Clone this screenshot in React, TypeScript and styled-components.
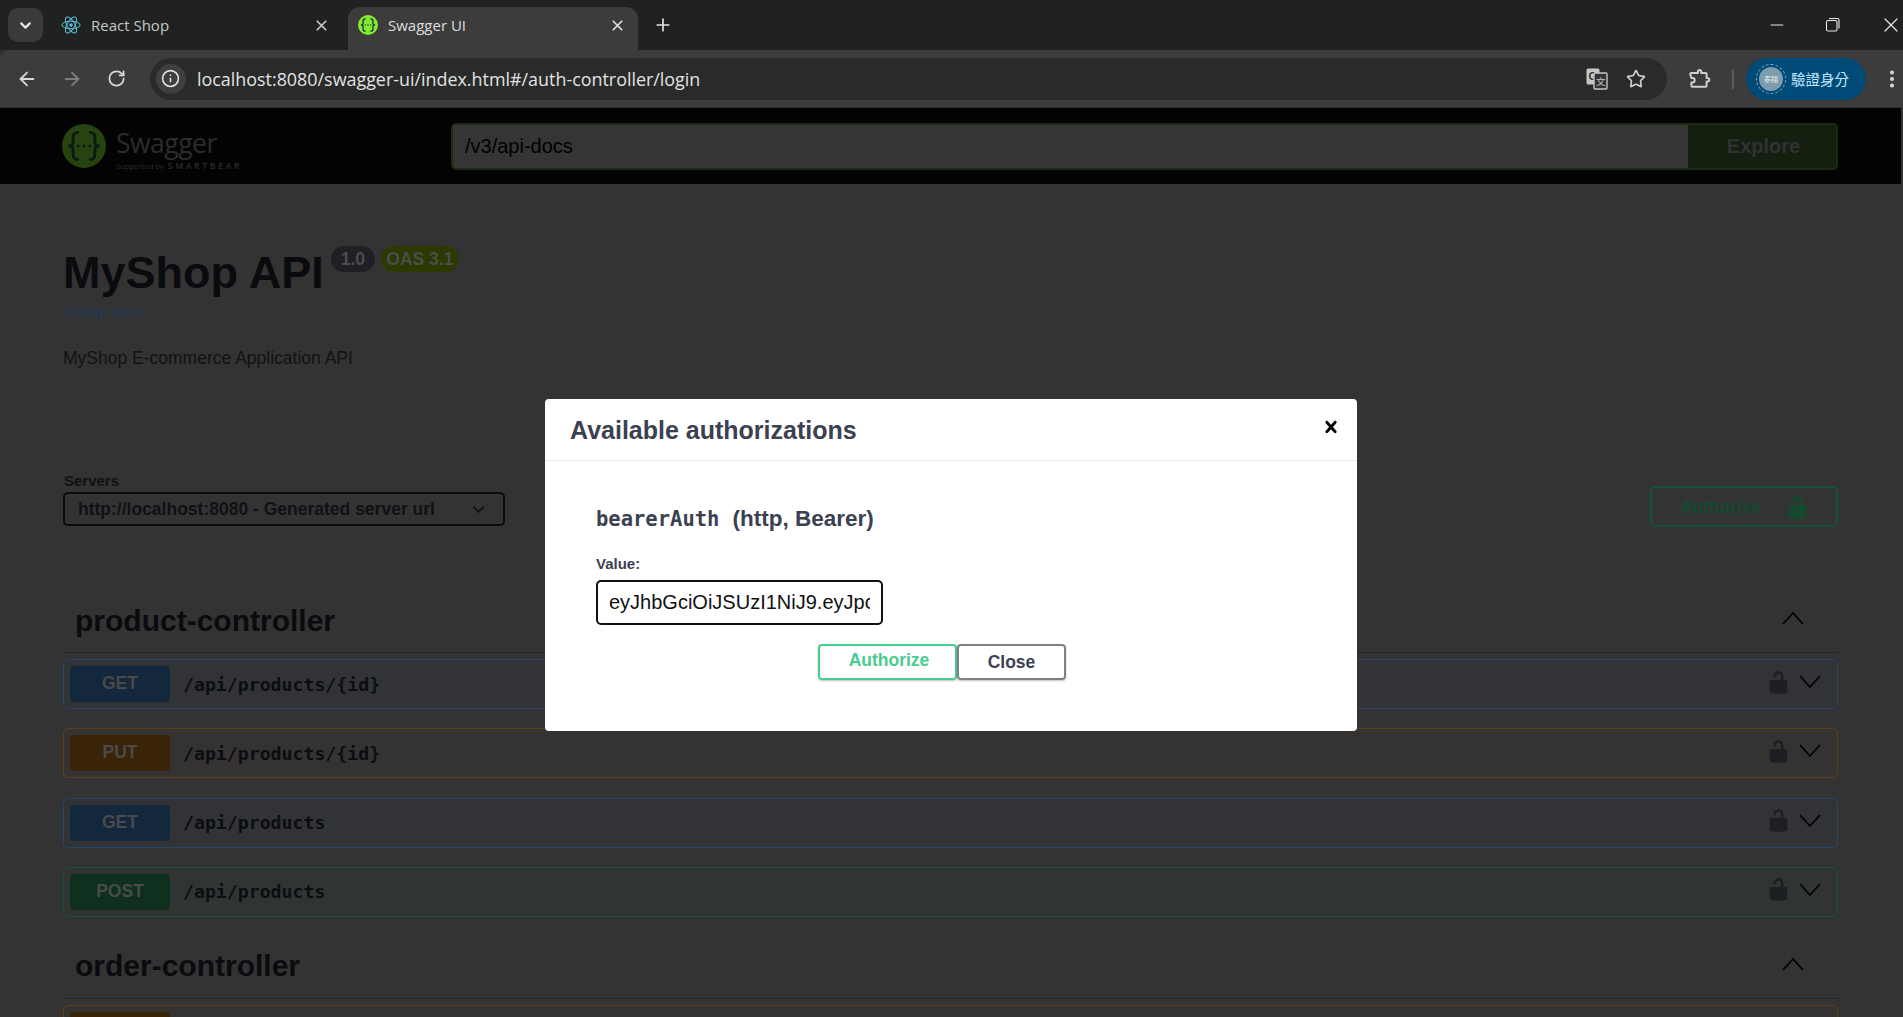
import React from "react";
import styled, { createGlobalStyle } from "styled-components";
import { ArrowLeft, ArrowRight, RotateCw, Info, Star, X, Plus, ChevronDown, Minus, EllipsisVertical } from "lucide-react";

const Global = createGlobalStyle`
  html, body { margin: 0; padding: 0; background: #333; }
  * { box-sizing: border-box; }
`;

const CHROME_FONT = `"Open Sans", "Noto Sans", sans-serif`;
const SANS = `"Liberation Sans", Arial, sans-serif`;
const MONO = `"DejaVu Sans Mono", "Liberation Mono", monospace`;

const Page = styled.div`
  position: relative;
  width: 1903px;
  height: 1017px;
  overflow: hidden;
  background: #333;
  font-family: ${SANS};
  display: flex;
  flex-direction: column;
`;

/* ---------- browser chrome ---------- */
const TabStrip = styled.div`
  height: 50px;
  flex: none;
  background: #202222;
  display: flex;
  align-items: flex-end;
  padding-left: 8px;
`;
const TabSearch = styled.div`
  width: 35px;
  height: 34px;
  margin-bottom: 8px;
  margin-right: 8px;
  border-radius: 10px;
  background: #3a3a3a;
  color: #e6e6e6;
  display: flex;
  align-items: center;
  justify-content: center;
`;
const Tab = styled.div<{ $active?: boolean; $width: number }>`
  width: ${(p) => p.$width}px;
  height: 43px;
  padding: 0 ${(p) => (p.$active ? 12 : 18)}px 7px 10px;
  border-radius: 12px 12px 0 0;
  background: ${(p) => (p.$active ? "#3c3c3c" : "transparent")};
  color: ${(p) => (p.$active ? "#dedede" : "#c4c7c5")};
  font-family: ${CHROME_FONT};
  font-size: 15px;
  display: flex;
  align-items: center;
  gap: 10px;
`;
const TabTitle = styled.span`
  flex: 1;
  white-space: nowrap;
`;
const NewTab = styled.div`
  margin: 0 0 7px 15px;
  height: 36px;
  color: #e3e3e3;
  display: flex;
  align-items: center;
`;
const WindowControls = styled.div`
  margin-left: auto;
  height: 50px;
  display: flex;
  align-items: center;
  gap: 38px;
  color: #e8e8e8;
`;
const Toolbar = styled.div`
  height: 58px;
  flex: none;
  background: #3c3c3c;
  border-radius: 10px 0 0 0;
  border-bottom: 1px solid #2e2e2e;
  display: flex;
  align-items: center;
  padding-left: 16px;
`;
const NavIcon = styled.div<{ $dim?: boolean }>`
  width: 22px;
  height: 22px;
  margin-right: 23px;
  color: ${(p) => (p.$dim ? "#7d7d7d" : "#d8d8d8")};
  display: flex;
  align-items: center;
  justify-content: center;
`;
const Omnibox = styled.div`
  width: 1518px;
  height: 42px;
  margin-left: -1px;
  border-radius: 21px;
  background: #292a2a;
  display: flex;
  align-items: center;
  padding: 0 21px 0 6px;
`;
const SiteInfo = styled.div`
  width: 30px;
  height: 30px;
  border-radius: 50%;
  background: #3f3f3f;
  color: #e3e3e3;
  display: flex;
  align-items: center;
  justify-content: center;
  margin-right: 11px;
`;
const Url = styled.span`
  flex: 1;
  color: #e3e3e3;
  font-family: ${CHROME_FONT};
  font-size: 17.9px;
  white-space: nowrap;
`;
const OmniIcons = styled.div`
  display: flex;
  align-items: center;
  gap: 18px;
  color: #cfcfcf;
`;
const ExtensionIcon = styled.div`
  margin-left: 20px;
  width: 24px;
  height: 24px;
  color: #cfcfcf;
`;
const Separator = styled.div`
  width: 2px;
  height: 20px;
  margin: 0 12px 0 21px;
  background: #5b5b5b;
`;
const ProfilePill = styled.div`
  width: 120px;
  height: 42px;
  border-radius: 21px;
  background: #004a77;
  color: #c2e7ff;
  font-family: "Noto Sans CJK TC", sans-serif;
  font-size: 14.5px;
  display: flex;
  align-items: center;
  padding-left: 13px;
  gap: 8px;
  white-space: nowrap;
`;
const Avatar = styled.div`
  position: relative;
  width: 24px;
  height: 24px;
  flex: none;
  border-radius: 50%;
  background: #7d9cad;
  color: #e9eef1;
  font-size: 7px;
  display: flex;
  align-items: center;
  justify-content: center;
  &::after {
    content: "";
    position: absolute;
    inset: -3px;
    border-radius: 50%;
    border: 1.5px dashed #86a9bf;
  }
`;
const MenuDots = styled.div`
  margin-left: 15px;
  color: #d8d8d8;
  display: flex;
`;

/* ---------- swagger top bar ---------- */
const TopBar = styled.div`
  height: 76px;
  flex: none;
  margin-right: 2px;
  background: #030303;
  display: flex;
  align-items: center;
  padding: 0 63px 0 62px;
`;
const Logo = styled.div`
  width: 389px;
  display: flex;
  align-items: center;
  gap: 10px;
`;
const LogoWords = styled.div`
  display: flex;
  flex-direction: column;
  color: #2c2c2c;
  margin-top: 4px;
`;
const LogoName = styled.span`
  font-family: "Open Sans", sans-serif;
  font-size: 26.5px;
  line-height: 36px;
  letter-spacing: -0.5px;
`;
const LogoSupport = styled.span`
  font-family: "Open Sans", sans-serif;
  font-size: 7.6px;
  line-height: 10px;
  white-space: nowrap;
`;
const Bear = styled.span`
  margin-left: 4px;
  font-size: 8.8px;
  font-weight: 600;
  letter-spacing: 2.5px;
`;
const SpecForm = styled.div`
  flex: 1;
  height: 47px;
  display: flex;
  border-radius: 5px;
  overflow: hidden;
  border: 2px solid #1c2a0f;
  background: #1c2a0f;
`;
const SpecInput = styled.input`
  flex: 1;
  min-width: 0;
  border: 0;
  outline: 0;
  padding: 0 12px;
  background: #353535;
  color: #000;
  font-family: ${SANS};
  font-size: 20px;
`;
const Explore = styled.div`
  width: 148px;
  padding-left: 3px;
  background: #151f10;
  color: #2f3334;
  font-size: 20px;
  font-weight: 700;
  display: flex;
  align-items: center;
  justify-content: center;
`;

/* ---------- swagger info ---------- */
const InfoBlock = styled.div`
  padding: 63px 65px 0 63px;
  height: 281px;
  flex: none;
`;
const TitleRow = styled.div`
  display: flex;
  align-items: flex-start;
  gap: 6px;
`;
const Title = styled.h2`
  margin: 0 1px 0 0;
  color: #0a0b0f;
  font-size: 45px;
  line-height: 52px;
  font-weight: 700;
`;
const Badge = styled.span<{ $bg: string; $width: number }>`
  width: ${(p) => p.$width}px;
  height: 26px;
  margin-top: -1px;
  border-radius: 13px;
  background: ${(p) => p.$bg};
  color: #4c4c4c;
  font-size: 17.5px;
  font-weight: 700;
  line-height: 26px;
  text-align: center;
`;
const SpecLink = styled.div`
  margin-top: 4px;
  color: #24395a;
  font-size: 15px;
  line-height: 18px;
`;
const Description = styled.p`
  margin: 25px 0 0;
  color: #121212;
  font-size: 17.5px;
  line-height: 25px;
`;
const ServersBar = styled.div`
  height: 101px;
  flex: none;
  padding: 7px 65px 0 64px;
  display: flex;
  align-items: flex-start;
  justify-content: space-between;
  border-bottom: 1px solid #303030;
`;
const ServersLabel = styled.div`
  color: #101116;
  font-size: 15px;
  font-weight: 700;
  line-height: 18px;
  margin-bottom: 2px;
`;
const ServerSelect = styled.div`
  width: 442px;
  height: 34px;
  margin-left: -1px;
  padding: 0 15px 0 13px;
  border: 2px solid #0b0c0f;
  border-radius: 5px;
  color: #101116;
  font-size: 17.5px;
  font-weight: 700;
  display: flex;
  align-items: center;
  justify-content: space-between;
  white-space: nowrap;
`;
const AuthorizeBtn = styled.div`
  width: 188px;
  height: 41px;
  margin-top: 14px;
  border: 2px solid #175038;
  border-radius: 5px;
  color: #134a2e;
  font-size: 17.5px;
  font-weight: 700;
  display: flex;
  align-items: center;
  justify-content: center;
  gap: 24px;
  padding: 1px 0 0 2px;
`;

/* ---------- operations ---------- */
const Section = styled.section<{ $top: number }>`
  padding: 0 65px 0 63px;
  margin-top: ${(p) => p.$top}px;
`;
const SectionHead = styled.div`
  height: 50px;
  padding: 0 33px 14px 12px;
  border-bottom: 1px solid #262626;
  display: flex;
  align-items: center;
  justify-content: space-between;
`;
const SectionTitle = styled.h3`
  margin: 0;
  color: #0a0b0f;
  font-size: 30px;
  line-height: 34px;
  font-weight: 700;
`;
const SectionToggle = styled.div`
  display: flex;
  margin-bottom: 5px;
`;
const OpList = styled.div`
  padding-top: 6px;
  display: flex;
  flex-direction: column;
  gap: 19.3px;
`;
const palette = {
  GET: { row: "#313337", border: "#254668", badge: "#14283d" },
  PUT: { row: "#353331", border: "#5e3e18", badge: "#3a2408" },
  POST: { row: "#303533", border: "#1d5039", badge: "#0f2f1f" },
};
type Method = keyof typeof palette;
const Row = styled.div<{ $m: Method }>`
  height: 50px;
  flex: none;
  padding: 0 15px 0 6px;
  border: 1px solid ${(p) => palette[p.$m].border};
  border-radius: 5px;
  background: ${(p) => palette[p.$m].row};
  display: flex;
  align-items: center;
`;
const MethodTag = styled.div<{ $m: Method }>`
  width: 100px;
  height: 36px;
  border-radius: 4px;
  background: ${(p) => palette[p.$m].badge};
  color: #4a4a4a;
  font-size: 17.5px;
  font-weight: 700;
  line-height: 35px;
  text-align: center;
`;
const RowPath = styled.span`
  flex: 1;
  margin-left: 13px;
  color: #0c0d12;
  font-family: ${MONO};
  font-size: 18.2px;
  font-weight: 700;
`;
const RowControls = styled.div`
  margin-bottom: 4px;
  display: flex;
  align-items: center;
  gap: 7px;
  color: #1e1f22;
`;

/* ---------- modal ---------- */
const Backdrop = styled.div`
  position: absolute;
  inset: 108px 0 0 0;
  display: flex;
  justify-content: center;
  padding-top: 291px;
`;
const Modal = styled.div`
  width: 812px;
  height: 332px;
  margin-right: 1px;
  background: #fff;
  border-radius: 4px;
  color: #3b4151;
`;
const ModalHead = styled.div`
  height: 62px;
  padding: 2px 14px 0 25px;
  border-bottom: 1px solid #ebebeb;
  display: flex;
  align-items: center;
  justify-content: space-between;
`;
const ModalTitle = styled.h3`
  margin: 0;
  font-size: 25px;
  font-weight: 700;
`;
const CloseIcon = styled.div`
  color: #000;
  display: flex;
  margin-top: -7px;
`;
const ModalBody = styled.div`
  padding: 45px 51px 0;
`;
const Scheme = styled.h4`
  margin: 0;
  font-size: 22.5px;
  line-height: 26px;
  font-weight: 700;
  display: flex;
  align-items: baseline;
  gap: 13px;
`;
const SchemeCode = styled.code`
  font-family: ${MONO};
  font-size: 20.5px;
`;
const ValueLabel = styled.label`
  display: block;
  margin-top: 23px;
  font-size: 15px;
  line-height: 18px;
  font-weight: 700;
`;
const TokenInput = styled.input`
  display: block;
  width: 287px;
  height: 45px;
  margin-top: 7px;
  padding: 0 11px;
  border: 2px solid #101010;
  border-radius: 5px;
  outline: 0;
  background: #fff;
  color: #111;
  font-family: ${SANS};
  font-size: 20px;
`;
const Buttons = styled.div`
  display: flex;
  justify-content: center;
  margin-top: 19px;
  padding-right: 18px;
`;
const ModalBtn = styled.div<{ $primary?: boolean }>`
  width: ${(p) => (p.$primary ? 139 : 109)}px;
  height: 36px;
  border: 2px solid ${(p) => (p.$primary ? "#49cc90" : "#808080")};
  border-radius: 4px;
  color: ${(p) => (p.$primary ? "#49cc90" : "#3b4151")};
  font-size: 17.5px;
  font-weight: 700;
  line-height: ${(p) => (p.$primary ? 28 : 33)}px;
  text-align: center;
  padding-left: ${(p) => (p.$primary ? 3 : 0)}px;
  box-shadow: 0 1px 2px rgba(0, 0, 0, 0.25);
`;

/* ---------- drawings ---------- */
const ReactIcon = () => (
  <svg width="20" height="20" viewBox="-11 -11 22 22" fill="none" stroke="#58c4dc" strokeWidth="1.1">
    <circle r="1.9" fill="#58c4dc" stroke="none" />
    <ellipse rx="10" ry="4.2" />
    <ellipse rx="10" ry="4.2" transform="rotate(60)" />
    <ellipse rx="10" ry="4.2" transform="rotate(120)" />
  </svg>
);
const Braces = ({ color, w = 1.6 }: { color: string; w?: number }) => (
  <g fill="none" stroke={color} strokeWidth={w} strokeLinecap="round" strokeLinejoin="round">
    <path d="M8.6 4.6c-2.2 0-2.5 1.2-2.5 3v2c0 1.3-.7 2.4-2 2.4 1.3 0 2 1.1 2 2.4v2c0 1.8.3 3 2.5 3" />
    <path d="M15.4 4.6c2.2 0 2.5 1.2 2.5 3v2c0 1.3.7 2.4 2 2.4-1.3 0-2 1.1-2 2.4v2c0 1.8-.3 3-2.5 3" />
    <path d="M8.8 12h.01M12 12h.01M15.2 12h.01" />
  </g>
);
const SwaggerFavicon = () => (
  <svg width="20" height="20" viewBox="0 0 24 24">
    <circle cx="12" cy="12" r="12" fill="#85ea2d" />
    <Braces color="#173647" />
  </svg>
);
const SwaggerLogo = () => (
  <svg width="44" height="44" viewBox="0 0 24 24">
    <circle cx="12" cy="12" r="12" fill="#27430f" />
    <Braces color="#0a1a14" />
  </svg>
);
const TranslateIcon = () => (
  <svg width="22" height="22" viewBox="0 0 22 22">
    <rect x="0.5" y="0.5" width="13" height="16" rx="1.5" fill="#c6c6c6" />
    <text x="2.5" y="12" fontFamily={SANS} fontSize="11" fontWeight="700" fill="#333">G</text>
    <rect x="8" y="5" width="13" height="16" rx="1" fill="#333" stroke="#c6c6c6" strokeWidth="1.4" />
    <text x="10" y="17" fontFamily="Noto Sans CJK TC" fontSize="9.5" fill="#c6c6c6">文</text>
  </svg>
);
const PuzzleIcon = () => (
  <svg width="24" height="24" viewBox="0 0 24 24" fill="none" stroke="currentColor" strokeWidth="2" strokeLinejoin="round">
    <path d="M8 6h3V4.6a1.6 1.6 0 0 1 3.2 0V6h4.400a1 1 0 0 1 1 1v4h1a1.7 1.7 0 0 1 0 3.4h-1v4.4a1 1 0 0 1-1 1H5.4a1 1 0 0 1-1-1V15.5h1a2.3 2.3 0 0 0 0-4.6h-1L3.2 7a1 1 0 0 1 1-1z" />
  </svg>
);
const Lock = ({ size = 25 }: { size?: number }) => (
  <svg width={size} height={size} viewBox="0 0 20 20" fill="currentColor">
    <path d="M15.8 8H14V5.6C14 2.703 12.665 1 10 1 7.334 1 6 2.703 6 5.6V6h2v-.801C8 3.754 8.797 3 10 3c1.203 0 2 .754 2 2.199V8H4c-.553 0-1 .646-1 1.199V17c0 .549.428 1.139.951 1.307l1.197.387C5.672 18.861 6.55 19 7.1 19h5.8c.549 0 1.428-.139 1.951-.307l1.196-.387c.524-.167.953-.757.953-1.306V9.199C17 8.646 16.352 8 15.8 8z" />
  </svg>
);
const Chevron = ({ up }: { up?: boolean }) => (
  <svg width="24" height="14" viewBox="0 0 24 14" fill="none" stroke="#000" strokeWidth="1.7">
    <path d={up ? "M2 13 12 2l10 11" : "M2 1l10 11L22 1"} />
  </svg>
);
const CloseGlyph = () => (
  <svg width="24" height="24" viewBox="0 0 20 20" fill="currentColor">
    <path d="M14.348 14.849c-.469.469-1.229.469-1.697 0L10 11.819l-2.651 3.029c-.469.469-1.229.469-1.697 0-.469-.469-.469-1.229 0-1.697l2.758-3.15-2.759-3.152c-.469-.469-.469-1.228 0-1.697s1.228-.469 1.697 0L10 8.183l2.651-3.031c.469-.469 1.228-.469 1.697 0s.469 1.229 0 1.697l-2.758 3.152 2.758 3.15c.469.469.469 1.229 0 1.698z" />
  </svg>
);
const RestoreGlyph = () => (
  <svg width="16" height="16" viewBox="0 0 16 16" fill="none" stroke="currentColor" strokeWidth="1.1">
    <rect x="1.5" y="3.5" width="10.5" height="10.5" rx="1.5" />
    <path d="M4 1.5h8.5a1.5 1.5 0 0 1 1.5 1.5v8.5" />
  </svg>
);

const OPS: { m: Method; path: string }[] = [
  { m: "GET", path: "/api/products/{id}" },
  { m: "PUT", path: "/api/products/{id}" },
  { m: "GET", path: "/api/products" },
  { m: "POST", path: "/api/products" },
];

const Operation = ({ m, path }: { m: Method; path: string }) => (
  <Row $m={m}>
    <MethodTag $m={m}>{m}</MethodTag>
    <RowPath>{path}</RowPath>
    <RowControls>
      <Lock />
      <Chevron />
    </RowControls>
  </Row>
);

export default function App() {
  return (
    <Page>
      <Global />
      <TabStrip>
        <TabSearch><ChevronDown size={17} strokeWidth={3} /></TabSearch>
        <Tab $width={297}>
          <ReactIcon />
          <TabTitle>React Shop</TabTitle>
          <X size={17} strokeWidth={2.4} />
        </Tab>
        <Tab $active $width={290}>
          <SwaggerFavicon />
          <TabTitle>Swagger UI</TabTitle>
          <X size={17} strokeWidth={2.4} />
        </Tab>
        <NewTab><Plus size={20} strokeWidth={2} /></NewTab>
        <WindowControls>
          <Minus size={20} strokeWidth={1.2} />
          <RestoreGlyph />
          <X size={24} strokeWidth={1.2} />
        </WindowControls>
      </TabStrip>
      <Toolbar>
        <NavIcon><ArrowLeft size={22} strokeWidth={2} /></NavIcon>
        <NavIcon $dim><ArrowRight size={22} strokeWidth={2} /></NavIcon>
        <NavIcon><RotateCw size={19} strokeWidth={2.2} /></NavIcon>
        <Omnibox>
          <SiteInfo><Info size={19} strokeWidth={2} /></SiteInfo>
          <Url>localhost:8080/swagger-ui/index.html#/auth-controller/login</Url>
          <OmniIcons>
            <TranslateIcon />
            <Star size={20} strokeWidth={2} />
          </OmniIcons>
        </Omnibox>
        <ExtensionIcon><PuzzleIcon /></ExtensionIcon>
        <Separator />
        <ProfilePill>
          <Avatar>泰翔</Avatar>
          驗證身分
        </ProfilePill>
        <MenuDots><EllipsisVertical size={22} strokeWidth={2.4} /></MenuDots>
      </Toolbar>
      <TopBar>
        <Logo>
          <SwaggerLogo />
          <LogoWords>
            <LogoName>Swagger</LogoName>
            <LogoSupport>Supported by<Bear>SMARTBEAR</Bear></LogoSupport>
          </LogoWords>
        </Logo>
        <SpecForm>
          <SpecInput readOnly value="/v3/api-docs" />
          <Explore>Explore</Explore>
        </SpecForm>
      </TopBar>
      <InfoBlock>
        <TitleRow>
          <Title>MyShop API</Title>
          <Badge $bg="#1e2026" $width={44}>1.0</Badge>
          <Badge $bg="#2a3a00" $width={78}>OAS 3.1</Badge>
        </TitleRow>
        <SpecLink>/v3/api-docs</SpecLink>
        <Description>MyShop E-commerce Application API</Description>
      </InfoBlock>
      <ServersBar>
        <div>
          <ServersLabel>Servers</ServersLabel>
          <ServerSelect>
            http://localhost:8080 - Generated server url
            <ChevronDown size={19} strokeWidth={2.2} />
          </ServerSelect>
        </div>
        <AuthorizeBtn>
          Authorize
          <Lock />
        </AuthorizeBtn>
      </ServersBar>
      <Section $top={37}>
        <SectionHead>
          <SectionTitle>product-controller</SectionTitle>
          <SectionToggle><Chevron up /></SectionToggle>
        </SectionHead>
        <OpList>
          {OPS.map((o, i) => <Operation key={i} m={o.m} path={o.path} />)}
        </OpList>
      </Section>
      <Section $top={32}>
        <SectionHead>
          <SectionTitle>order-controller</SectionTitle>
          <SectionToggle><Chevron up /></SectionToggle>
        </SectionHead>
        <OpList>
          <Row $m="PUT"><MethodTag $m="PUT" /></Row>
        </OpList>
      </Section>
      <Backdrop>
        <Modal>
          <ModalHead>
            <ModalTitle>Available authorizations</ModalTitle>
            <CloseIcon><CloseGlyph /></CloseIcon>
          </ModalHead>
          <ModalBody>
            <Scheme>
              <SchemeCode>bearerAuth</SchemeCode>
              <span>(http, Bearer)</span>
            </Scheme>
            <ValueLabel>Value:</ValueLabel>
            <TokenInput readOnly value="eyJhbGciOiJSUzI1NiJ9.eyJpc3MiOiJzZWxmIiwic3ViIjoiYWRtaW4ifQ" />
            <Buttons>
              <ModalBtn $primary>Authorize</ModalBtn>
              <ModalBtn>Close</ModalBtn>
            </Buttons>
          </ModalBody>
        </Modal>
      </Backdrop>
    </Page>
  );
}
